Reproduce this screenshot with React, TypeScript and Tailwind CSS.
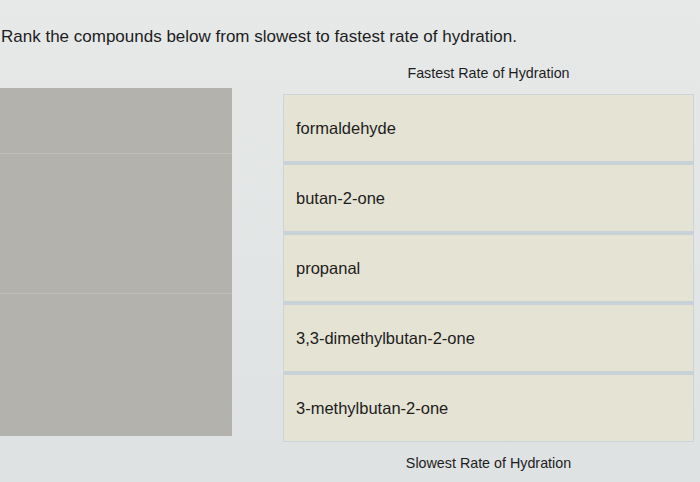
const compounds = [
  "formaldehyde",
  "butan-2-one",
  "propanal",
  "3,3-dimethylbutan-2-one",
  "3-methylbutan-2-one",
];

export default function App() {
  return (
    <div
      className="w-[700px] h-[482px] overflow-hidden bg-gradient-to-b from-[#e7e9e9] to-[#dfe2e2] text-[#1d1d1d]"
      style={{ fontFamily: '"Liberation Sans", Arial, sans-serif' }}
    >
      <h1 className="pt-[27px] pl-[1px] text-[17px] leading-[20px]">
        Rank the compounds below from slowest to fastest rate of hydration.
      </h1>

      <div className="mt-[18px] pl-[283px] pr-[6px] text-center text-[14.3px] leading-[17px]">
        Fastest Rate of Hydration
      </div>

      <div className="mt-[6px] flex items-start gap-[51px]">
        <div className="w-[232px] h-[348px] bg-[#b4b2ad] flex flex-col">
          <div className="h-[66px] border-b border-[#bfbdb8]" />
          <div className="h-[140px] border-b border-[#bfbdb8]" />
          <div className="flex-1" />
        </div>

        <div className="mt-[6px] w-[411px] border border-[#cdd4d7] bg-[#c7d1d7] flex flex-col gap-[4px]">
          {compounds.map((c) => (
            <div
              key={c}
              className="h-[66px] bg-[#e5e3d4] flex items-center pl-[12px] text-[16.5px]"
            >
              {c}
            </div>
          ))}
        </div>
      </div>

      <div className="mt-[13px] pl-[283px] pr-[6px] text-center text-[14.3px] leading-[17px]">
        Slowest Rate of Hydration
      </div>
    </div>
  );
}
